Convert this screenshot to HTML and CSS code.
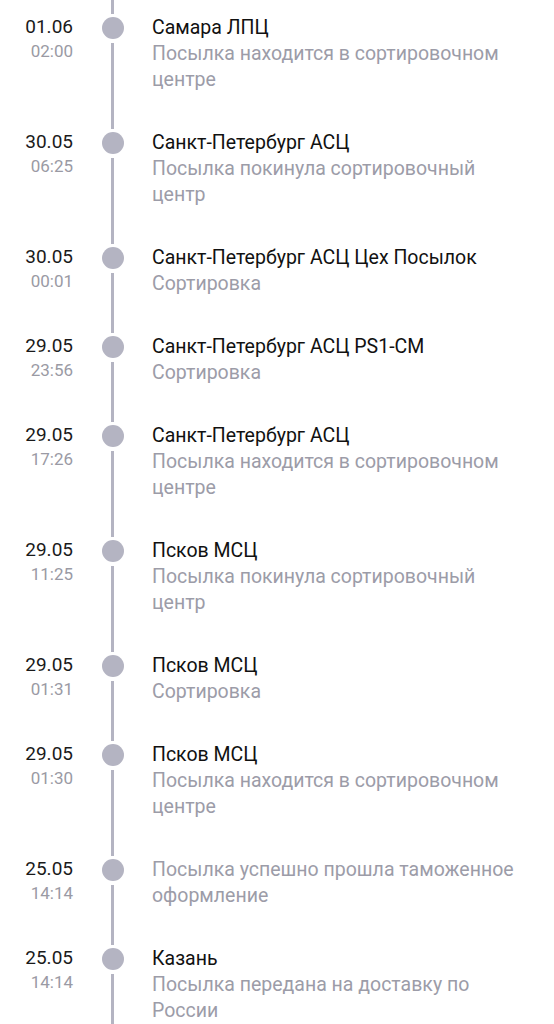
FILE: index.html
```html
<!DOCTYPE html>
<html lang="ru">
<head>
    <meta charset="UTF-8">
    <meta name="viewport" content="width=device-width, initial-scale=1.0">
    <title>Отслеживание посылки</title>
    <link rel="stylesheet" href="styles.css">
</head>
<body>
    <ul class="track">
        <li class="event">
            <div class="when"><span class="date">01.06</span><span class="time">02:00</span></div>
            <div class="rail"><span class="seg"></span><span class="dot"></span><span class="seg fill"></span></div>
            <div class="what">
                <div class="place">Самара ЛПЦ</div>
                <div class="status">Посылка находится в сортировочном центре</div>
            </div>
        </li>
        <li class="event">
            <div class="when"><span class="date">30.05</span><span class="time">06:25</span></div>
            <div class="rail"><span class="seg"></span><span class="dot"></span><span class="seg fill"></span></div>
            <div class="what">
                <div class="place">Санкт-Петербург АСЦ</div>
                <div class="status">Посылка покинула сортировочный центр</div>
            </div>
        </li>
        <li class="event">
            <div class="when"><span class="date">30.05</span><span class="time">00:01</span></div>
            <div class="rail"><span class="seg"></span><span class="dot"></span><span class="seg fill"></span></div>
            <div class="what">
                <div class="place">Санкт-Петербург АСЦ Цех Посылок</div>
                <div class="status">Сортировка</div>
            </div>
        </li>
        <li class="event">
            <div class="when"><span class="date">29.05</span><span class="time">23:56</span></div>
            <div class="rail"><span class="seg"></span><span class="dot"></span><span class="seg fill"></span></div>
            <div class="what">
                <div class="place">Санкт-Петербург АСЦ PS1-CM</div>
                <div class="status">Сортировка</div>
            </div>
        </li>
        <li class="event">
            <div class="when"><span class="date">29.05</span><span class="time">17:26</span></div>
            <div class="rail"><span class="seg"></span><span class="dot"></span><span class="seg fill"></span></div>
            <div class="what">
                <div class="place">Санкт-Петербург АСЦ</div>
                <div class="status">Посылка находится в сортировочном центре</div>
            </div>
        </li>
        <li class="event">
            <div class="when"><span class="date">29.05</span><span class="time">11:25</span></div>
            <div class="rail"><span class="seg"></span><span class="dot"></span><span class="seg fill"></span></div>
            <div class="what">
                <div class="place">Псков МСЦ</div>
                <div class="status">Посылка покинула сортировочный центр</div>
            </div>
        </li>
        <li class="event">
            <div class="when"><span class="date">29.05</span><span class="time">01:31</span></div>
            <div class="rail"><span class="seg"></span><span class="dot"></span><span class="seg fill"></span></div>
            <div class="what">
                <div class="place">Псков МСЦ</div>
                <div class="status">Сортировка</div>
            </div>
        </li>
        <li class="event">
            <div class="when"><span class="date">29.05</span><span class="time">01:30</span></div>
            <div class="rail"><span class="seg"></span><span class="dot"></span><span class="seg fill"></span></div>
            <div class="what">
                <div class="place">Псков МСЦ</div>
                <div class="status">Посылка находится в сортировочном центре</div>
            </div>
        </li>
        <li class="event">
            <div class="when"><span class="date">25.05</span><span class="time">14:14</span></div>
            <div class="rail"><span class="seg"></span><span class="dot"></span><span class="seg fill"></span></div>
            <div class="what">
                <div class="status">Посылка успешно прошла таможенное оформление</div>
            </div>
        </li>
        <li class="event">
            <div class="when"><span class="date">25.05</span><span class="time">14:14</span></div>
            <div class="rail"><span class="seg"></span><span class="dot"></span><span class="seg fill"></span></div>
            <div class="what">
                <div class="place">Казань</div>
                <div class="status">Посылка передана на доставку по России</div>
            </div>
        </li>
    </ul>
</body>
</html>
```

FILE: styles.css
```css
body {
    margin: 0;
    padding: 0;
    background-color: #fff;
    font-family: Roboto, "Noto Sans", sans-serif;
    color: #111;
}

.track {
    list-style: none;
    margin: 0;
    padding: 0;
}

.event {
    display: grid;
    grid-template-columns: 73px 79px 1fr;
}

.when {
    display: flex;
    flex-direction: column;
    align-items: flex-end;
    padding-top: 15px;
}

.date {
    font-size: 19px;
    line-height: 24px;
    color: #1a1a1a;
}

.time {
    font-size: 17px;
    line-height: 24px;
    color: #9a9aa4;
}

.rail {
    display: flex;
    flex-direction: column;
    align-items: center;
}

.seg {
    width: 3px;
    height: 14px;
    background-color: #b4b4c2;
}

.seg.fill {
    flex: 1;
}

.dot {
    width: 22px;
    height: 22px;
    margin: 3px 0 4px;
    border-radius: 50%;
    background-color: #b4b4c2;
}

.what {
    padding: 15px 30px 22px 0;
    font-size: 19.5px;
    line-height: 26px;
}

.place {
    color: #111;
}

.status {
    color: #9c9ca8;
}
```
